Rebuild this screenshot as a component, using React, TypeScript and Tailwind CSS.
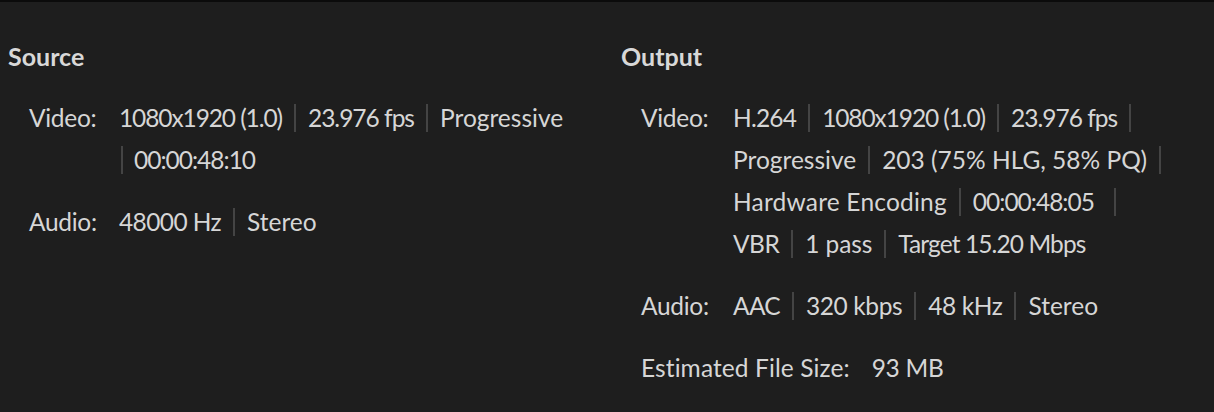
import React from "react";

type Item = [string, string?];

const Sep = () => (
  <span className="inline-block w-[2px] h-[28px] bg-[#444] mx-[12px]" />
);

function Line({ items, trailing, trailGap }: { items: Item[]; trailing?: boolean; trailGap?: boolean }) {
  return (
    <div className="h-[42px] flex items-center whitespace-nowrap">
      {items.map(([t, c], i) => (
        <React.Fragment key={i}>
          {i > 0 && <Sep />}
          <span className={c ?? "tracking-[0px]"}>{t}</span>
        </React.Fragment>
      ))}
      {trailGap && <span className="inline-block w-[8px]" />}
      {trailing && <Sep />}
    </div>
  );
}

const NUM = "tracking-[-1.1px]";
const FPS = "tracking-[-1px]";
const TC = "tracking-[-1px]";

export default function App() {
  return (
    <div
      className="w-[1214px] h-[412px] bg-[#1e1e1e] border-t-2 border-[#0b0b0b] text-[#d6d6d6] flex"
      style={{ fontFamily: "Lato, 'Open Sans', sans-serif" }}
    >
      <div className="w-[613px] pl-[8px] pt-[37px]">
        <div className="text-[25px] font-bold text-[#d8d8d8] h-[36px] flex items-center">Source</div>
        <div className="mt-[22px] text-[24.5px] pl-[21px]">
          <div className="flex">
            <div className="w-[90px] h-[42px] flex items-center tracking-[-0.3px]">Video:</div>
            <div>
              <Line items={[["1080x1920 (1.0)", NUM], ["23.976 fps", FPS], ["Progressive"]]} />
              <div className="h-[42px] flex items-center whitespace-nowrap">
                <span className="inline-block w-[2px] h-[28px] bg-[#444] ml-[2px] mr-[11px]" />
                <span className={TC}>00:00:48:10</span>
              </div>
            </div>
          </div>
          <div className="flex mt-[20px]">
            <div className="w-[90px] h-[42px] flex items-center tracking-[-0.3px]">Audio:</div>
            <Line items={[["48000 Hz", "tracking-[-0.6px]"], ["Stereo"]]} />
          </div>
        </div>
      </div>
      <div className="flex-1 pl-[8px] pt-[37px]">
        <div className="text-[25px] font-bold text-[#d8d8d8] h-[36px] flex items-center">Output</div>
        <div className="mt-[22px] text-[24.5px] pl-[20px]">
          <div className="flex">
            <div className="w-[92px] h-[42px] flex items-center tracking-[-0.3px]">Video:</div>
            <div>
              <Line
                items={[["H.264", "tracking-[-0.8px]"], ["1080x1920 (1.0)", NUM], ["23.976 fps", FPS]]}
                trailing
              />
              <Line items={[["Progressive"], ["203 (75% HLG, 58% PQ)", "tracking-[0px]"]]} trailing />
              <Line items={[["Hardware Encoding", "tracking-[0.2px]"], ["00:00:48:05", TC]]} trailGap trailing />
              <Line items={[["VBR", "tracking-[-0.5px]"], ["1 pass", "tracking-[-0.1px]"], ["Target 15.20 Mbps", "tracking-[-0.9px]"]]} />
            </div>
          </div>
          <div className="flex mt-[20px]">
            <div className="w-[92px] h-[42px] flex items-center tracking-[-0.3px]">Audio:</div>
            <Line items={[["AAC", "tracking-[-0.7px]"], ["320 kbps", "tracking-[-0.4px]"], ["48 kHz", "tracking-[-0.4px]"], ["Stereo"]]} />
          </div>
          <div className="flex mt-[20px] h-[42px] items-center">
            <span className="mr-[22px] tracking-[0.1px]">Estimated File Size:</span>
            <span className="tracking-[-0.3px]">93 MB</span>
          </div>
        </div>
      </div>
    </div>
  );
}
